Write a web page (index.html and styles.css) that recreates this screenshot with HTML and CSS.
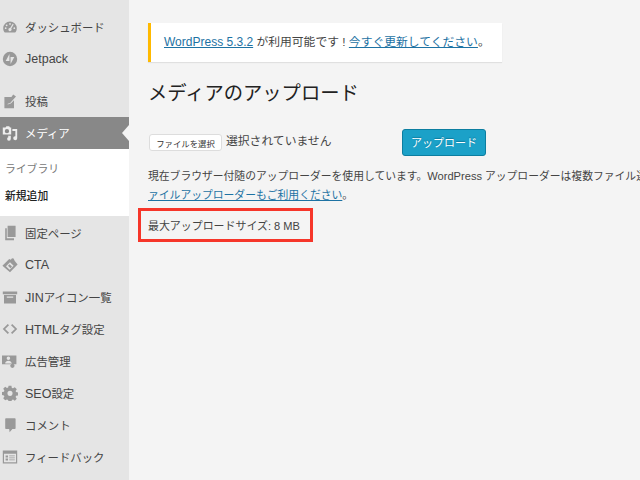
FILE: index.html
```html
<!DOCTYPE html>
<html lang="ja">
<head>
<meta charset="utf-8">
<title>メディアのアップロード</title>
<link rel="stylesheet" href="styles.css">
</head>
<body>
<div class="page">
  <nav class="sidebar">
    <ul class="menu menu-first">
      <li class="item"><svg class="icon" viewBox="0 0 20 20"><path d="M10 3a8.500 8.500 0 0 0-8.500 8.500c0 2.200.8 4 2 5.500h13c1.200-1.500 2-3.300 2-5.500A8.500 8.500 0 0 0 10 3zM10 5a1.100 1.100 0 1 1 0 2.200A1.100 1.100 0 0 1 10 5zM5.800 6.800a1.100 1.100 0 1 1 0 2.200 1.100 1.100 0 0 1 0-2.200zM3.500 11.500a1.100 1.100 0 1 1 2.200 0 1.100 1.100 0 0 1-2.200 0zM14.300 11.500a1.100 1.100 0 1 1 2.200 0 1.100 1.100 0 0 1-2.200 0zM14.600 6.800l-3 5.200a2 2 0 1 1-1.400-.8l3.200-5.200z" fill-rule="evenodd"/></svg><span class="label">ダッシュボード</span></li>
      <li class="item"><svg class="icon" viewBox="0 0 20 20"><path d="M10 1a9 9 0 1 0 0 18 9 9 0 0 0 0-18zM9.300 3.800v8.700H4.600zM10.700 16.200V7.500h4.700z" fill-rule="evenodd"/></svg><span class="label lat">Jetpack</span></li>
    </ul>
    <ul class="menu menu-group">
      <li class="item"><svg class="icon" viewBox="0 0 20 20"><path d="M3 5h9.500L8 10.500 7 14.500l4-1.300 4-4.200V19H3zM14 2l3.500 2.500-7.300 8-3 1 .8-3.100z"/></svg><span class="label">投稿</span></li>
      <li class="item item-active"><svg class="icon" viewBox="0 0 20 20"><path d="M1 3h3.500l1-1.500h3.500L10 3h1.500v9H1zM6.200 5a2.700 2.700 0 1 0 0 5.400 2.700 2.700 0 0 0 0-5.400zM13 5h6v11.500a2.500 2.500 0 1 1-2.300-2.500V7.500H13zM7.500 13.500h3.500v3.700a2.300 2.300 0 1 1-2-2.200v-.3H7.500z" fill-rule="evenodd"/></svg><span class="label">メディア</span></li>
    </ul>
    <ul class="submenu">
      <li class="subitem">ライブラリ</li>
      <li class="subitem subitem-current">新規追加</li>
    </ul>
    <ul class="menu menu-last">
      <li class="item"><svg class="icon" viewBox="0 0 20 20"><path d="M7 1h10v14H7zM4 4h2v12.500h9V19H4z"/></svg><span class="label">固定ページ</span></li>
      <li class="item"><svg class="icon" viewBox="0 0 20 20"><path d="M12.500 1.500l2 .5 1 2 .5 1 3.500 4.500-9.500 9.500L.5 11 9 2.500l2 1zM10 6.500L5 11.500l4.500 4.500 5-5z" fill-rule="evenodd"/><path d="M7.500 11l2-2 3 3-2 2z"/></svg><span class="label lat">CTA</span></li>
      <li class="item"><svg class="icon" viewBox="0 0 20 20"><path d="M1 3h18v3.500H1zM2.500 7.500h15V18h-15zM6 9.500v1.500h8V9.500z" fill-rule="evenodd"/></svg><span class="label"><span class="lat">JIN</span>アイコン一覧</span></li>
      <li class="item"><svg class="icon" viewBox="0 0 20 20"><path d="M8 4.500L2.500 10 8 15.500M12 4.500l5.500 5.500-5.500 5.500" fill="none" stroke="#999" stroke-width="2.200"/></svg><span class="label"><span class="lat">HTML</span>タグ設定</span></li>
      <li class="item"><svg class="icon" viewBox="0 0 20 20"><path d="M0 3h18v11h-4a3.500 3.500 0 0 0-4 0H0zM8 4.500a2.200 2.200 0 1 0 0 4.400 2.200 2.200 0 0 0 0-4.400zM4 13c0-2.300 1.800-3.400 4-3.400s4 1.100 4 3.400z" fill-rule="evenodd"/><circle cx="13" cy="16" r="2.700"/></svg><span class="label">広告管理</span></li>
      <li class="item"><svg class="icon" viewBox="0 0 20 20"><path d="M8.200 1h3.600l.5 2.600 1.500.6 2.200-1.500 2.500 2.500-1.500 2.200.6 1.500 2.400.5v3.600l-2.400.5-.6 1.500 1.500 2.200-2.500 2.500-2.200-1.500-1.500.6-.5 2.600H8.200l-.5-2.600-1.500-.6L4 19.200l-2.500-2.500L3 14.500l-.6-1.500L0 12.500V8.900l2.400-.5.6-1.500-1.500-2.200L4 2.200l2.200 1.500 1.500-.6zM10 7.200a3.200 3.200 0 1 0 0 6.400 3.200 3.200 0 0 0 0-6.400z" fill-rule="evenodd"/></svg><span class="label"><span class="lat">SEO</span>設定</span></li>
      <li class="item"><svg class="icon" viewBox="0 0 20 20"><path d="M5 1.500h11a1 1 0 0 1 1 1V14a1 1 0 0 1-1 1h-3l-3.500 4L9 15H5a1 1 0 0 1-1-1V2.500a1 1 0 0 1 1-1z"/></svg><span class="label">コメント</span></li>
      <li class="item"><svg class="icon" viewBox="0 0 20 20"><path d="M1 2h18v16H1zM2.500 6v10.500h15V6zM4.500 8h3v2.500h-3zM9 8h7v1H9zM9 10.500h7v1H9zM4.500 12h3v2.500h-3zM9 13h7v1H9z" fill-rule="evenodd"/></svg><span class="label">フィードバック</span></li>
    </ul>
  </nav>
  <main class="content">
    <div class="notice"><a href="#" class="lat">WordPress 5.3.2</a> が利用可能です ! <a href="#">今すぐ更新してください</a>。</div>
    <h1 class="title">メディアのアップロード</h1>
    <div class="upload-row">
      <span class="file-group"><button class="file-button" type="button">ファイルを選択</button><span class="file-label">選択されていません</span></span>
      <button class="primary-button" type="button">アップロード</button>
    </div>
    <p class="help">現在ブラウザー付随のアップローダーを使用しています。<span class="lat">WordPress</span> アップローダーは複数ファイル選択に対応しています。<br><a href="#">ァイルアップローダーもご利用ください</a>。</p>
    <p class="max-size">最大アップロードサイズ: <span class="lat">8 MB</span><span class="highlight"></span></p>
  </main>
</div>
</body>
</html>
```

FILE: styles.css
```css
* { box-sizing: border-box; }
html, body { margin: 0; height: 100%; overflow: hidden; }
body {
  background: #f4f4f4;
  color: #444;
  font-family: "Liberation Sans", "Noto Sans CJK JP", sans-serif;
  font-size: 12px;
}
ul { list-style: none; margin: 0; padding: 0; }
a { color: #1d72a3; }
.page { display: flex; width: 640px; height: 480px; overflow: hidden; }
.sidebar {
  flex: 0 0 129px;
  background: #e5e5e5;
  padding-top: 11px;
  color: #444;
}
.menu-group { margin-top: 10px; }
.menu-last { padding-top: 1px; }
.item {
  position: relative;
  display: flex;
  align-items: center;
  gap: 7px;
  height: 32px;
  padding-left: 2px;
  font-size: 11.400px;
  white-space: nowrap;
}
.item .lat { font-size: 12.500px; }
.icon { flex: 0 0 16px; width: 16px; height: 16px; fill: #999; }
.item-active { background: #888; color: #fff; }
.item-active .icon { fill: #eee; }
.item-active::after {
  content: "";
  position: absolute;
  right: 0;
  top: 8px;
  border: 8px solid transparent;
  border-right: 7px solid #f4f4f4;
  border-left-width: 0;
}
.submenu { background: #fff; padding: 7px 0 6px; }
.subitem { height: 27px; line-height: 27px; padding-left: 5px; color: #777; font-size: 10.800px; }
.subitem-current { color: #222; font-weight: 500; }
.content { flex: 1; min-width: 0; padding: 23px 0 0 19px; white-space: nowrap; }
.notice {
  width: 354px;
  height: 39px;
  line-height: 38px;
  background: #fff;
  border-left: 3px solid #ffb900;
  padding-left: 13px;
  box-shadow: 0 1px 1px rgba(0, 0, 0, .08);
  font-size: 11.800px;
}
.notice .lat { font-size: 12px; }
.title { margin: 16px 0 0; font-size: 19.300px; font-weight: 400; line-height: 32px; color: #222; }
.upload-row { display: flex; align-items: center; margin-top: 19px; }
.file-group { display: flex; align-items: center; width: 254px; padding-left: 1px; }
.file-button {
  width: 73px;
  height: 17px;
  padding: 0;
  margin-right: 4px;
  background: #fff;
  border: 1px solid #ddd;
  border-radius: 3px;
  color: #333;
  font: 8.400px "Noto Sans CJK JP", sans-serif;
}
.file-label { font-size: 11.800px; padding-bottom: 6px; }
.primary-button {
  width: 84px;
  height: 27px;
  padding: 0 0 2px;
  background: #1ba1c8;
  border: 1px solid #0c7ea0;
  border-radius: 3px;
  color: #fff;
  font: 11px "Noto Sans CJK JP", sans-serif;
  text-shadow: 0 -1px 1px #0e7a9c;
}
.help { margin: 11px 0 0; line-height: 19px; font-size: 10.800px; }
.help .lat { font-size: 11.100px; }
.max-size { position: relative; margin: 12px 0 0; width: 160px; line-height: 18px; font-size: 10.950px; }
.max-size .lat { font-size: 11.100px; }
.highlight {
  position: absolute;
  left: -10px;
  top: -9px;
  width: 175px;
  height: 34px;
  border: 3px solid #f6362a;
}
```
